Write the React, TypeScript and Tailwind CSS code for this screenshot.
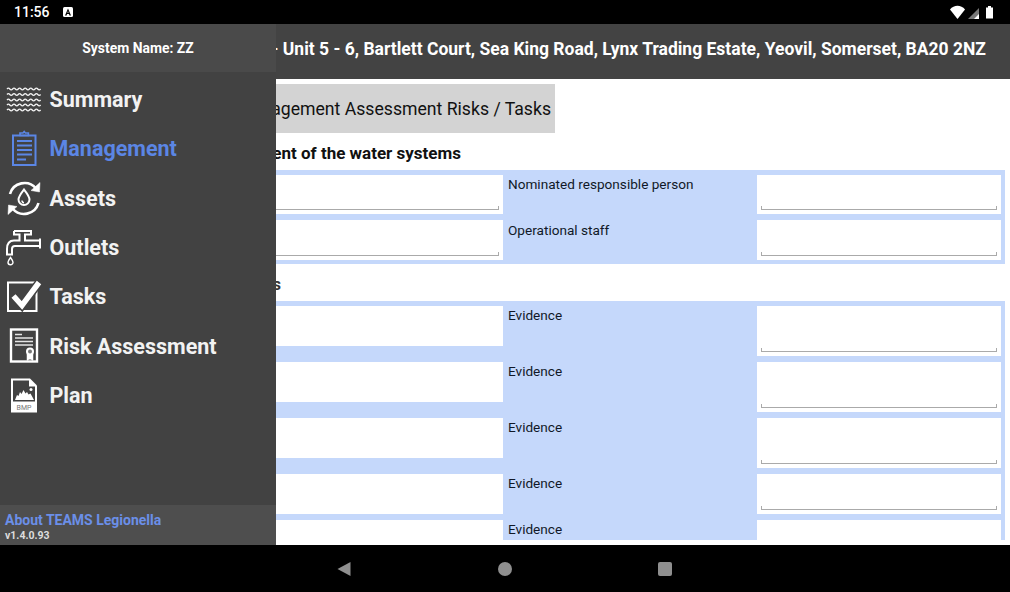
import React from "react";

const Wave = ({ y }: { y: number }) => (
  <path d={`M7 ${y} q1.4 -1.8 2.8 0 t2.8 0 t2.8 0 t2.8 0 t2.8 0 t2.8 0 t2.8 0 t2.8 0 t2.8 0 t2.8 0 t2.8 0 t2.8 0`} fill="none" stroke="#f2f2f2" strokeWidth="1.3" />
);

const icons: Record<string, React.ReactNode> = {
  Summary: (
    <>
      <Wave y={13} />
      <Wave y={18.5} />
      <Wave y={24} />
      <Wave y={29} />
      <Wave y={34} />
    </>
  ),
  Management: (
    <g fill="none" stroke="#5b86e5">
      <rect x="13" y="10.5" width="22.5" height="29.5" strokeWidth="2" />
      <path d="M20 10.5v-2.5h3l1.200-1.500 1.200 1.500h3v2.500z" strokeWidth="1.600" />
      <path d="M17 16h15M17 20.500h15M17 25h15M17 29.500h15M17 34.500h9" strokeWidth="2" />
    </g>
  ),
  Assets: (
    <g fill="none" stroke="#fff" strokeWidth="2.600">
      <path d="M10 20a15 15 0 0 1 26-5.500" />
      <path d="M38.500 29a15 15 0 0 1-26 5.500" />
      <path d="M40 8.500l-.5 9.500-8.500-1.500z" fill="#fff" strokeWidth="0.500" />
      <path d="M8 40.500l.5-9.500 8.500 1.500z" fill="#fff" strokeWidth="0.500" />
      <path d="M24 15.500c3.500 4.500 5.500 7 5.500 10a5.500 5.500 0 0 1-11 0c0-3 2-5.500 5.500-10z" strokeWidth="2" />
      <path d="M22 26.500a2.200 2.200 0 0 0 2 2.200" strokeWidth="1.400" />
    </g>
  ),
  Outlets: (
    <g fill="none" stroke="#fff" strokeWidth="2">
      <path d="M14 7h17v3.500h-6v6h14" />
      <path d="M14 7v3.500h5.500v6H14c-5 0-7 3-7 8.500v5.500h5V25c0-2 1-3 3-3h24" />
      <path d="M40 14.500v10" />
      <path d="M10.500 33.500c1.800 2.500 2.500 3.500 2.500 4.800a2.500 2.500 0 0 1-5 0c0-1.300.7-2.300 2.500-4.800z" strokeWidth="1.400" />
    </g>
  ),
  Tasks: (
    <g fill="none">
      <rect x="8" y="9.500" width="28.500" height="28.500" stroke="#fff" strokeWidth="2" />
      <path d="M13.500 23l8.500 9.500 17-23" stroke="#424242" strokeWidth="8.500" />
      <path d="M13.500 23l8.500 9.500 17-23" stroke="#fff" strokeWidth="5.500" />
    </g>
  ),
  "Risk Assessment": (
    <g fill="none" stroke="#fff">
      <rect x="11" y="7.500" width="26" height="32" strokeWidth="2.400" />
      <path d="M15 12.500h7M15 16h18M15 19.500h18M15 23h18" strokeWidth="1.300" stroke="#e5e5e5" />
      <path d="M27 32v6.500l3-1.500 3 1.500V32" fill="#fff" strokeWidth="0.500" />
      <circle cx="30" cy="29.500" r="4" fill="#fff" strokeWidth="0" />
      <circle cx="30" cy="29.500" r="2" fill="#777" strokeWidth="0" />
    </g>
  ),
  Plan: (
    <g>
      <path d="M11 6.500h19l7 7v27H11z" fill="#fff" />
      <path d="M13 8.500h16v6h6v15H13z" fill="#424242" />
      <path d="M15 28l2-5 1.500 1 1.500-4 1.500 2 2-4 2 3.500 1.500-1.500 1.500 2.500 2-1 3.500 6.500z" fill="#fff" />
      <circle cx="31" cy="17.500" r="1.500" fill="#fff" />
      <text x="24" y="38" textAnchor="middle" fontSize="7" fontFamily="Roboto, sans-serif" fill="#777">BMP</text>
    </g>
  ),
};

const nav = ["Summary", "Management", "Assets", "Outlets", "Tasks", "Risk Assessment", "Plan"];

const Input = ({ h }: { h: string }) => (
  <div className={`bg-white p-1 flex items-end ${h}`}>
    <div className="w-full h-[4px] border-x border-b border-[#aaaaaa]" />
  </div>
);

const Label = ({ text, pt = "pt-[1px]" }: { text: string; pt?: string }) => (
  <div className={`pl-[5px] ${pt} text-[13.6px] leading-[16px] text-[#111827]`}>{text}</div>
);

export default function App() {
  const evidenceRows = ["h-[50px]", "h-[50px]", "h-[50px]", "h-[40px]", "h-[40px]"];
  return (
    <div className="w-[1010px] h-[592px] flex flex-col bg-black overflow-hidden font-['Roboto',sans-serif]">
      <div className="h-[24px] shrink-0 bg-black flex items-center justify-between pl-[14px] pr-[14px]">
        <div className="flex items-center gap-[13px]">
          <span className="text-white text-[14px] font-medium">11:56</span>
          <div className="w-[10px] h-[10px] bg-white rounded-[1.5px] flex items-center justify-center">
            <svg width="8" height="8" viewBox="0 0 8 8">
              <path d="M1 7.500L4 .5l3 7H5.500L5 6H3l-.5 1.500zM3.400 4.800h1.200L4 3z" fill="#000" />
            </svg>
          </div>
        </div>
        <svg width="46" height="14" viewBox="0 0 46 14">
          <path d="M0 4.500C4-.5 11-.5 15 4.500L7.500 14z" fill="#fff" />
          <path d="M18 14L29 3v11z" fill="#777" />
          <path d="M24 14l5-5v5z" fill="#fff" />
          <path d="M36 2.500h2v-1.500h3v1.500h2v11h-7z" fill="#fff" />
        </svg>
      </div>

      <div className="relative flex-1 min-h-0 flex flex-col bg-white">
        <div className="h-[55px] shrink-0 bg-[#434343] flex justify-end pr-[24px] pt-[12px]">
          <span className="text-white font-bold text-[17.5px] leading-[26px] whitespace-nowrap">
            Site - Unit 5 - 6, Bartlett Court, Sea King Road, Lynx Trading Estate, Yeovil, Somerset, BA20 2NZ
          </span>
        </div>

        <div className="h-[461px] shrink-0 overflow-hidden pt-[5px]">
          <div className="w-[555px] h-[49px] pt-[1px] bg-[#d3d3d3] flex items-center justify-end pr-[4px] text-[17.65px] text-[#111]">
            Management Assessment Risks / Tasks
          </div>
          <div className="w-[461px] h-[37px] pt-[8px] text-right font-bold text-[17px] leading-[24px] text-[#111]">
            Management of the water systems
          </div>
          <div className="w-[1005px] bg-[#c5d8fb] pt-[5px] pb-[4px] pr-[4px] grid grid-cols-[503px_254px_244px] gap-y-[6px]">
            <Input h="h-[39px]" />
            <Label text="Nominated responsible person" />
            <Input h="h-[39px]" />
            <Input h="h-[40px]" />
            <Label text="Operational staff" pt="pt-[2px]" />
            <Input h="h-[40px]" />
          </div>
          <div className="w-[281px] h-[37px] pt-[9px] text-right font-bold text-[16px] leading-[24px] text-[#333]">
            Records
          </div>
          <div className="w-[1005px] bg-[#c5d8fb] pt-[5px] pr-[4px] grid grid-cols-[503px_254px_244px] gap-y-[6px]">
            {evidenceRows.map((right, i) => (
              <React.Fragment key={i}>
                <div className="h-[40px] bg-white" />
                <Label text="Evidence" />
                <Input h={right} />
              </React.Fragment>
            ))}
          </div>
        </div>

        <div className="absolute left-0 top-0 bottom-0 w-[276px] bg-[#424242] flex flex-col">
          <div className="h-[48px] pt-[1px] shrink-0 bg-[#4a4a4a] flex items-center justify-center text-white font-bold text-[13.9px]">
            System Name: ZZ
          </div>
          <div className="flex-1 pt-[3.4px]">
            {nav.map((n) => (
              <div key={n} className="h-[49.33px] flex items-center">
                <svg width="50" height="49" viewBox="0 0 50 49" className="shrink-0">
                  {icons[n]}
                </svg>
                <span className={`text-[21.5px] font-bold -ml-[0.5px] ${n === "Management" ? "text-[#5b86e5]" : "text-[#f2f2f2]"}`}>{n}</span>
              </div>
            ))}
          </div>
          <div className="h-[40px] shrink-0 bg-[#4e4e4e] pl-[5px] pt-[6px]">
            <div className="text-[14px] leading-[18px] font-bold text-[#6b8fe8]">About TEAMS Legionella</div>
            <div className="text-[10.5px] leading-[12px] pt-[1px] font-bold text-[#dddddd]">v1.4.0.93</div>
          </div>
        </div>
      </div>

      <div className="h-[47px] shrink-0 bg-black flex items-center justify-center">
        <div className="w-[160px] flex justify-center pr-[2px]">
          <svg width="14" height="16" viewBox="0 0 14 16"><path d="M13.500 1v14L.5 8z" fill="#8f8f8f" /></svg>
        </div>
        <div className="w-[160px] flex justify-center">
          <div className="w-[14px] h-[14px] rounded-full bg-[#8f8f8f]" />
        </div>
        <div className="w-[160px] flex justify-center">
          <div className="w-[14px] h-[14px] rounded-[2px] bg-[#8f8f8f]" />
        </div>
      </div>
    </div>
  );
}
